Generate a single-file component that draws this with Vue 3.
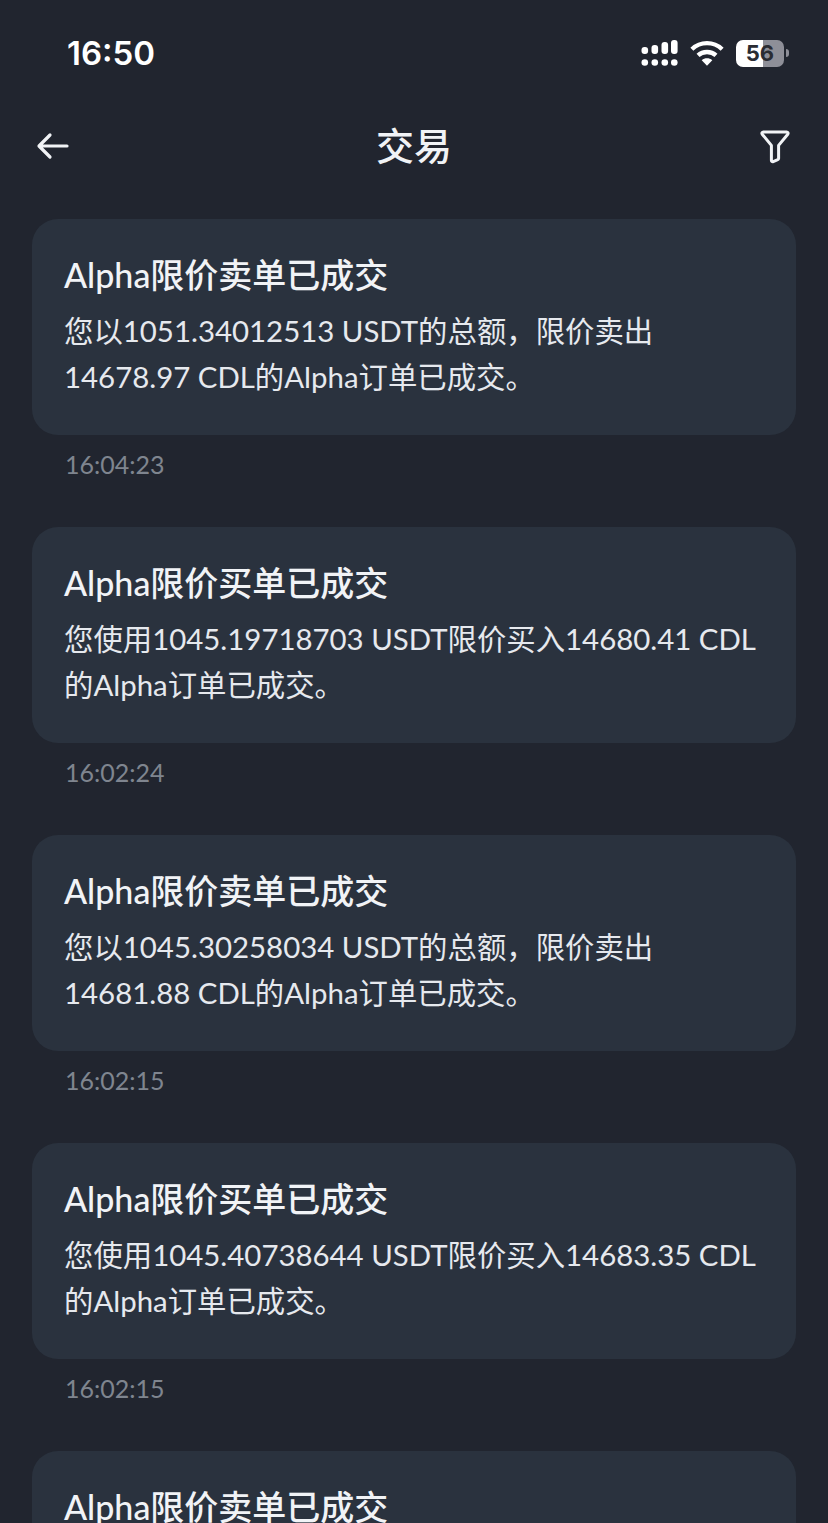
<template>
  <div class="page">
    <div class="status">
      <div class="time">16:50</div>
      <div class="status-right">
        <svg class="signal" width="37" height="26" viewBox="0 0 37 26">
          <g fill="#fff">
            <rect x="0.5" y="7" width="6.6" height="7" rx="3" />
            <rect x="10.5" y="5" width="6.6" height="9" rx="3" />
            <rect x="20.5" y="2" width="6.6" height="12" rx="3" />
            <rect x="30" y="0" width="6.6" height="14" rx="3" />
            <circle cx="3.8" cy="22.5" r="3.3" />
            <circle cx="13.8" cy="22.5" r="3.3" />
            <circle cx="23.8" cy="22.5" r="3.3" />
            <circle cx="33.3" cy="22.5" r="3.3" />
          </g>
        </svg>
        <svg class="wifi" width="34" height="28" viewBox="0 0 36 28">
          <g fill="none" stroke="#fff" stroke-width="4.6">
            <path d="M2 10C11 1.5 25 1.5 34 10" />
            <path d="M8.5 16.5C13.5 11.8 22.5 11.8 27.5 16.5" />
          </g>
          <path d="M12.4 21.6C15.6 18.8 20.4 18.8 23.6 21.6L18 27.4Z" fill="#fff" />
        </svg>
        <div class="battery">
          <div class="battery-body">56</div>
          <div class="battery-tip"></div>
        </div>
      </div>
    </div>

    <div class="nav">
      <svg width="34" height="28" viewBox="0 0 34 28">
        <path d="M31 14H3.5M14 3L3 14L14 25" fill="none" stroke="#f1f3f6" stroke-width="3.2" stroke-linecap="round" stroke-linejoin="round" />
      </svg>
      <div class="nav-title">交易</div>
      <svg class="filter" width="30" height="34" viewBox="0 0 30 34">
        <path d="M3.4 2H26.6C27.9 2 28.5 3.3 27.8 4.2L18.6 15.4V28.4C18.6 29 18.3 29.4 17.8 29.6L13.2 31.6C12.3 32 11.4 31.4 11.4 30.4V15.4L2.2 4.2C1.5 3.3 2.1 2 3.4 2Z" fill="none" stroke="#f1f3f6" stroke-width="3" stroke-linejoin="round" />
      </svg>
    </div>

    <div class="list">
      <div v-for="it in items" :key="it.time + it.title" class="entry">
        <div class="card">
          <div class="title">{{ it.title }}</div>
          <div class="body">
            <div v-for="l in it.lines" :key="l">{{ l }}</div>
          </div>
        </div>
        <div class="stamp">{{ it.time }}</div>
      </div>
    </div>
  </div>
</template>

<script setup>
// last card runs off the bottom of the screen, only its title shows
const items = [
  {
    title: "Alpha限价卖单已成交",
    lines: ["您以1051.34012513 USDT的总额，限价卖出", "14678.97 CDL的Alpha订单已成交。"],
    time: "16:04:23",
  },
  {
    title: "Alpha限价买单已成交",
    lines: ["您使用1045.19718703 USDT限价买入14680.41 CDL", "的Alpha订单已成交。"],
    time: "16:02:24",
  },
  {
    title: "Alpha限价卖单已成交",
    lines: ["您以1045.30258034 USDT的总额，限价卖出", "14681.88 CDL的Alpha订单已成交。"],
    time: "16:02:15",
  },
  {
    title: "Alpha限价买单已成交",
    lines: ["您使用1045.40738644 USDT限价买入14683.35 CDL", "的Alpha订单已成交。"],
    time: "16:02:15",
  },
  {
    title: "Alpha限价卖单已成交",
    lines: [],
    time: "",
  },
];
</script>

<style>
html,
body {
  margin: 0;
  background: #21252f;
}
</style>

<style scoped>
.page {
  height: 1523px;
  overflow: hidden;
  background: #21252f;
  color: #f1f3f6;
  font-family: Lato, "Noto Sans CJK SC", sans-serif;
}
.status {
  display: flex;
  justify-content: space-between;
  align-items: center;
  height: 106px;
  padding: 0 39px 0 67px;
  box-sizing: border-box;
}
.time {
  font-family: Inter, sans-serif;
  font-size: 33px;
  font-weight: 600;
  color: #fff;
}
.status-right {
  display: flex;
  align-items: center;
  gap: 12px;
}
.battery {
  display: flex;
  align-items: center;
  gap: 2px;
}
.battery-body {
  width: 48px;
  height: 27px;
  border-radius: 7px;
  background: linear-gradient(90deg, #fff 27px, #8e8f98 27px);
  text-align: center;
  line-height: 27px;
  font-family: Inter, sans-serif;
  font-size: 22px;
  font-weight: 700;
  color: #2a2c33;
}
.battery-tip {
  width: 3px;
  height: 8px;
  border-radius: 0 3px 3px 0;
  background: #8e8f98;
}
.nav {
  display: flex;
  justify-content: space-between;
  align-items: center;
  height: 80px;
  padding: 0 38px 0 36px;
}
.nav-title {
  font-size: 38px;
  line-height: 76px;
  font-weight: 500;
  margin: 0 2px 2px 0;
}
.filter {
  margin-top: 2px;
}
.list {
  display: flex;
  flex-direction: column;
  gap: 30px;
  margin-top: 33px;
  padding: 0 32px;
}
.card {
  height: 216px;
  box-sizing: border-box;
  padding: 33px 32px 0;
  border-radius: 26px;
  background: #2a323e;
}
.title {
  font-size: 34px;
  line-height: 46px;
  font-weight: 500;
}
.body {
  margin-top: 10px;
  font-size: 29.4px;
  line-height: 46px;
  white-space: nowrap;
  color: #e6e9ee;
}
.stamp {
  height: 62px;
  padding: 0 33px;
  font-size: 25px;
  line-height: 58px;
  color: #7f858f;
}
</style>
